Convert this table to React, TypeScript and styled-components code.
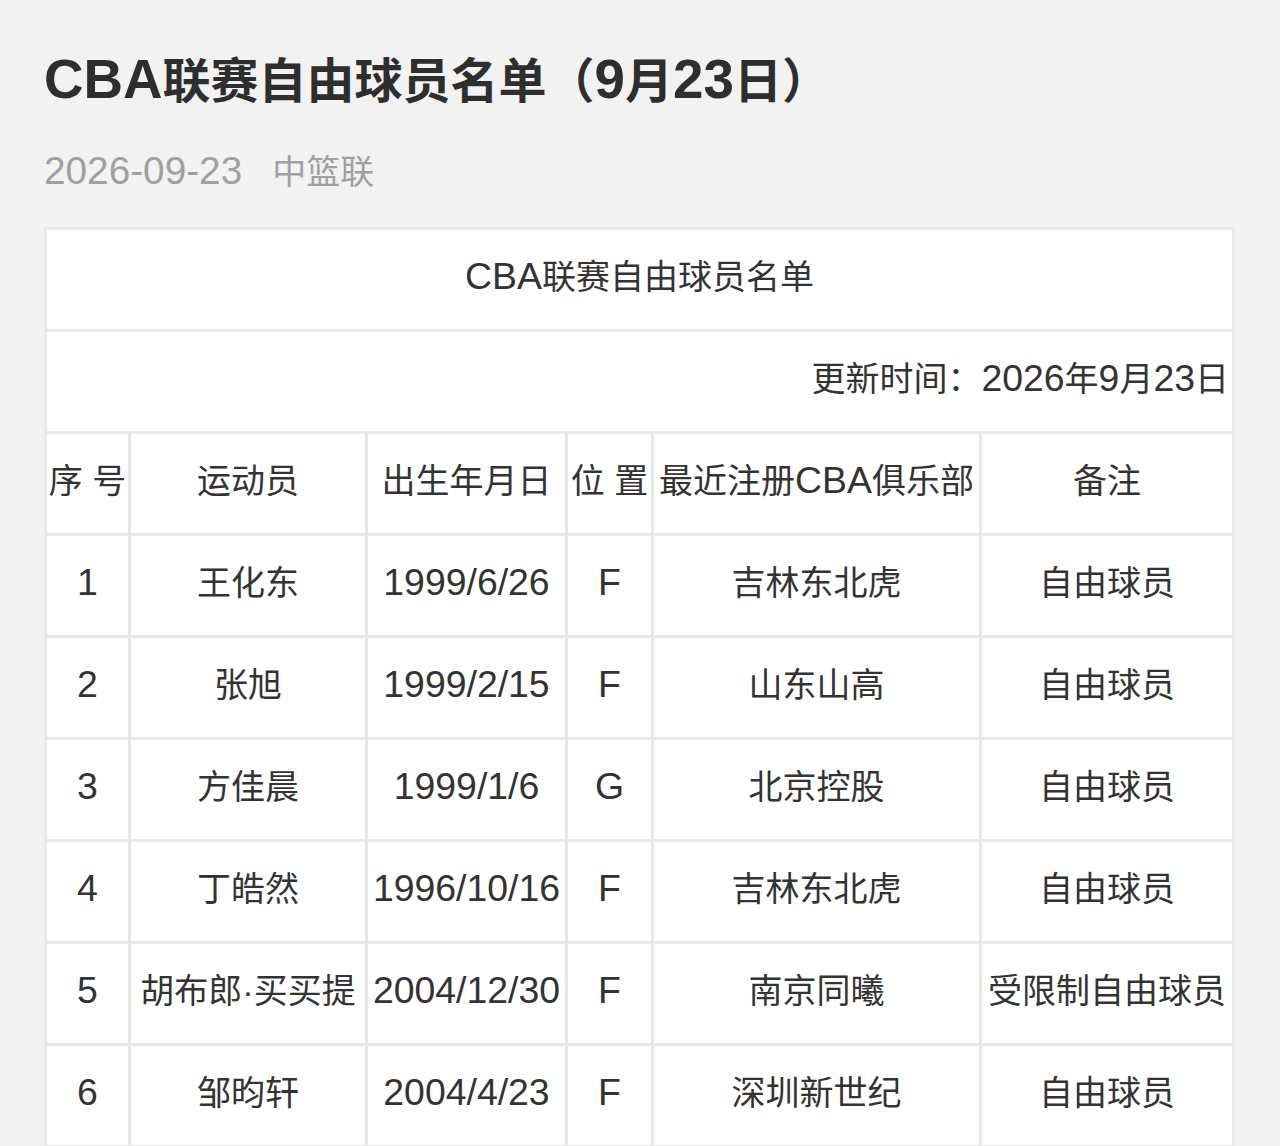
import styled, { createGlobalStyle } from "styled-components";

const GlobalStyle = createGlobalStyle`
	body {
		margin: 0;
		background: #f2f2f2;
		font-family: "Liberation Sans", "Noto Sans CJK SC", sans-serif;
		color: #333;
	}
`;

const Page = styled.main`
	padding: 50px 45px 0 44px;
`;

const Title = styled.h1`
	margin: 0;
	font-size: 48px;
	line-height: 64px;
	font-weight: 700;
	color: #2e2e2e;
`;

const Meta = styled.div`
	margin-top: 34px;
	font-size: 34px;
	line-height: 48px;
	color: #a0a0a0;
	span + span {
		margin-left: 30px;
	}
`;

// latin runs render a bit larger than the CJK, like the system font in the shot
const Latin = styled.span<{ $scale?: number }>`
	font-size: ${(p) => p.$scale ?? 1.1}em;
	line-height: 1;
`;

const Grid = styled.div`
	margin-top: 31px;
	width: 1185px;
	display: grid;
	grid-template-columns: 81px 234px 197px 83px 325px 250px;
	grid-auto-rows: 99px;
	gap: 3px;
	padding: 3px;
	background: #e8e8e8;
`;

const Cell = styled.div<{ $span?: boolean; $align?: "center" | "right" }>`
	background: #fff;
	display: flex;
	align-items: center;
	justify-content: ${(p) => (p.$align === "right" ? "flex-end" : "center")};
	grid-column: ${(p) => (p.$span ? "1 / -1" : "auto")};
	font-size: 34px;
	line-height: 44px;
	color: #333;
	white-space: nowrap;
	padding: 0 ${(p) => (p.$align === "right" ? "3px" : "0")} 6px 0;
`;

function Mixed({ text, scale }: { text: string; scale?: number }) {
	const parts = text.split(/([0-9A-Za-z/\-]+)/).filter((p) => p !== "");
	return (
		<>
			{parts.map((p, i) =>
				/^[0-9A-Za-z/\-]+$/.test(p) ? (
					<Latin key={i} $scale={scale}>
						{p}
					</Latin>
				) : (
					<span key={i}>{p}</span>
				)
			)}
		</>
	);
}

const headers = ["序 号", "运动员", "出生年月日", "位 置", "最近注册CBA俱乐部", "备注"];

const players = [
	["1", "王化东", "1999/6/26", "F", "吉林东北虎", "自由球员"],
	["2", "张旭", "1999/2/15", "F", "山东山高", "自由球员"],
	["3", "方佳晨", "1999/1/6", "G", "北京控股", "自由球员"],
	["4", "丁皓然", "1996/10/16", "F", "吉林东北虎", "自由球员"],
	["5", "胡布郎·买买提", "2004/12/30", "F", "南京同曦", "受限制自由球员"],
	["6", "邹昀轩", "2004/4/23", "F", "深圳新世纪", "自由球员"],
];

export default function App(): JSX.Element {
	return (
		<>
			<GlobalStyle />
			<Page>
				<Title>
					<Mixed text="CBA联赛自由球员名单（9月23日）" scale={1.14} />
				</Title>
				<Meta>
					<span>
						<Latin $scale={1.14}>2026-09-23</Latin>
					</span>
					<span>中篮联</span>
				</Meta>
				<Grid>
					<Cell $span>
						<Mixed text="CBA联赛自由球员名单" />
					</Cell>
					<Cell $span $align="right">
						<Mixed text="更新时间：2026年9月23日" />
					</Cell>
					{headers.map((h) => (
						<Cell key={h}>
							<Mixed text={h} />
						</Cell>
					))}
					{players.map((row) =>
						row.map((value, i) => (
							<Cell key={row[0] + "-" + i}>
								<Mixed text={value} />
							</Cell>
						))
					)}
				</Grid>
			</Page>
		</>
	);
}
